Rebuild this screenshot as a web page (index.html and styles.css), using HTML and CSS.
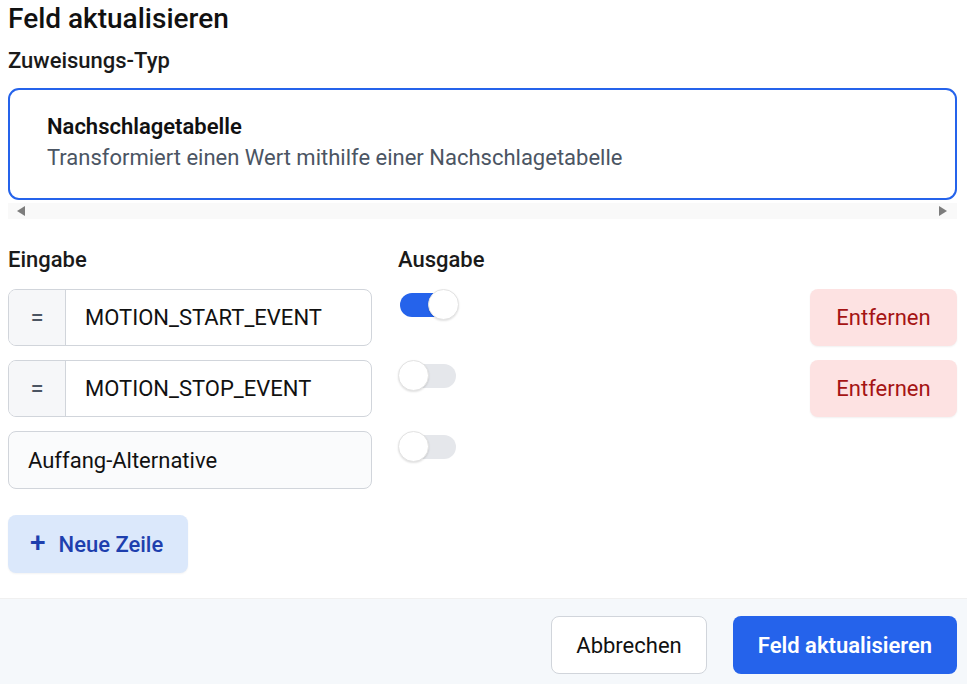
FILE: index.html
```html
<!DOCTYPE html>
<html lang="de">
<head>
<meta charset="utf-8">
<title>Feld aktualisieren</title>
<link rel="stylesheet" href="styles.css">
</head>
<body>
<div class="dialog">
  <div class="content">
    <h1 class="title">Feld aktualisieren</h1>
    <div class="label">Zuweisungs-Typ</div>
    <div class="scroller">
      <div class="type-card">
        <div class="type-name">Nachschlagetabelle</div>
        <div class="type-desc">Transformiert einen Wert mithilfe einer Nachschlagetabelle</div>
      </div>
      <div class="scrollbar">
        <span class="arrow arrow-left"></span>
        <span class="arrow arrow-right"></span>
      </div>
    </div>

    <div class="table">
      <div class="col-head">Eingabe</div>
      <div class="col-head">Ausgabe</div>
      <div></div>
      <div></div>

      <div class="input-group">
        <span class="addon">=</span>
        <span class="value">MOTION_START_EVENT</span>
      </div>
      <div class="toggle on"><span class="track"></span><span class="knob"></span></div>
      <div></div>
      <button class="btn-remove">Entfernen</button>

      <div class="input-group">
        <span class="addon">=</span>
        <span class="value">MOTION_STOP_EVENT</span>
      </div>
      <div class="toggle"><span class="track"></span><span class="knob"></span></div>
      <div></div>
      <button class="btn-remove">Entfernen</button>

      <div class="input-plain">Auffang-Alternative</div>
      <div class="toggle"><span class="track"></span><span class="knob"></span></div>
      <div></div>
      <div></div>
    </div>

    <button class="btn-add"><span class="plus">+</span>Neue Zeile</button>
  </div>
  <div class="footer">
    <button class="btn-cancel">Abbrechen</button>
    <button class="btn-primary">Feld aktualisieren</button>
  </div>
</div>
</body>
</html>
```

FILE: styles.css
```css
* { box-sizing: border-box; }
html, body {
  margin: 0;
  padding: 0;
  background: #ffffff;
  font-family: Roboto, "Liberation Sans", Arial, sans-serif;
  color: #111827;
}
.dialog {
  width: 967px;
  height: 684px;
  display: flex;
  flex-direction: column;
  overflow: hidden;
}
.content {
  flex: 1;
  padding: 2px 10px 0 8px;
}
.title {
  margin: 0;
  font-size: 28px;
  font-weight: 500;
  line-height: 34px;
  color: #111111;
}
.label {
  margin-top: 12px;
  font-size: 22px;
  font-weight: 500;
  line-height: 26px;
  color: #1a1a1a;
}
.scroller {
  margin-top: 14px;
}
.type-card {
  border: 2px solid #2563eb;
  border-radius: 11px;
  height: 112px;
  padding: 24px 37px 0;
}
.type-name {
  font-size: 22px;
  font-weight: 600;
  line-height: 26px;
  color: #111111;
}
.type-desc {
  margin-top: 5px;
  font-size: 22px;
  line-height: 26px;
  color: #4b5563;
}
.scrollbar {
  height: 16px;
  margin-top: 3px;
  background: #f9f9f9;
  display: flex;
  justify-content: space-between;
  align-items: center;
  padding: 0 10px 0 9px;
}
.arrow {
  width: 0;
  height: 0;
  border-top: 5px solid transparent;
  border-bottom: 5px solid transparent;
}
.arrow-left { border-right: 8px solid #7d7d7d; }
.arrow-right { border-left: 8px solid #7d7d7d; }

.table {
  margin-top: 28px;
  display: grid;
  grid-template-columns: 364px 60px 1fr 147px;
  column-gap: 26px;
  row-gap: 14px;
  align-items: start;
}
.col-head {
  font-size: 22px;
  font-weight: 500;
  line-height: 26px;
  color: #1a1a1a;
  margin-bottom: 2px;
}
.input-group {
  display: flex;
  height: 57px;
  border: 1px solid #d1d5db;
  border-radius: 8px;
  overflow: hidden;
  background: #ffffff;
}
.addon {
  width: 57px;
  flex: none;
  background: #f6f7f9;
  border-right: 1px solid #d1d5db;
  display: flex;
  align-items: center;
  justify-content: center;
  font-size: 24px;
  color: #4b5563;
}
.value {
  display: flex;
  align-items: center;
  padding-left: 19px;
  font-size: 22px;
  color: #111111;
}
.input-plain {
  height: 58px;
  border: 1px solid #d1d5db;
  border-radius: 8px;
  background: #fafbfc;
  display: flex;
  align-items: center;
  padding-left: 19px;
  font-size: 22px;
  color: #111111;
}
.toggle {
  position: relative;
  width: 62px;
  height: 32px;
  margin-left: -2px;
}
.track {
  position: absolute;
  left: 4px;
  top: 4px;
  width: 56px;
  height: 24px;
  border-radius: 12px;
  background: #e5e7eb;
}
.toggle.on .track { background: #2563eb; }
.knob {
  position: absolute;
  left: 2px;
  top: 0;
  width: 31px;
  height: 31px;
  border-radius: 50%;
  background: #ffffff;
  border: 1px solid #e3e3e3;
  box-shadow: 0 1px 2px rgba(0,0,0,0.12);
}
.toggle.on .knob { left: 32px; }

button {
  font-family: Roboto, "Liberation Sans", Arial, sans-serif;
  cursor: pointer;
}
.btn-remove {
  height: 57px;
  width: 147px;
  border: none;
  border-radius: 8px;
  background: #fde2e2;
  color: #a51414;
  font-size: 22px;
  font-weight: 400;
  box-shadow: 0 1px 2px rgba(0,0,0,0.06);
}
.btn-add {
  margin-top: 26px;
  height: 58px;
  width: 180px;
  border: none;
  border-radius: 8px;
  background: #dbe8fb;
  color: #1e3fae;
  font-size: 22px;
  font-weight: 500;
  display: flex;
  align-items: center;
  padding-left: 22px;
  box-shadow: 0 1px 2px rgba(0,0,0,0.05);
}
.plus {
  font-size: 28px;
  font-weight: 500;
  margin-right: 13px;
  margin-top: -3px;
}
.footer {
  height: 86px;
  flex: none;
  background: #f5f8fb;
  border-top: 1px solid #f0f0f0;
  display: flex;
  justify-content: flex-end;
  align-items: flex-start;
  gap: 26px;
  padding: 17px 10px 0 0;
}
.btn-cancel {
  height: 58px;
  width: 156px;
  background: #ffffff;
  border: 1px solid #d1d5db;
  border-radius: 8px;
  color: #111111;
  font-size: 22px;
}
.btn-primary {
  height: 58px;
  width: 224px;
  background: #2563eb;
  border: none;
  border-radius: 8px;
  color: #ffffff;
  font-size: 22px;
  font-weight: 600;
}
```
